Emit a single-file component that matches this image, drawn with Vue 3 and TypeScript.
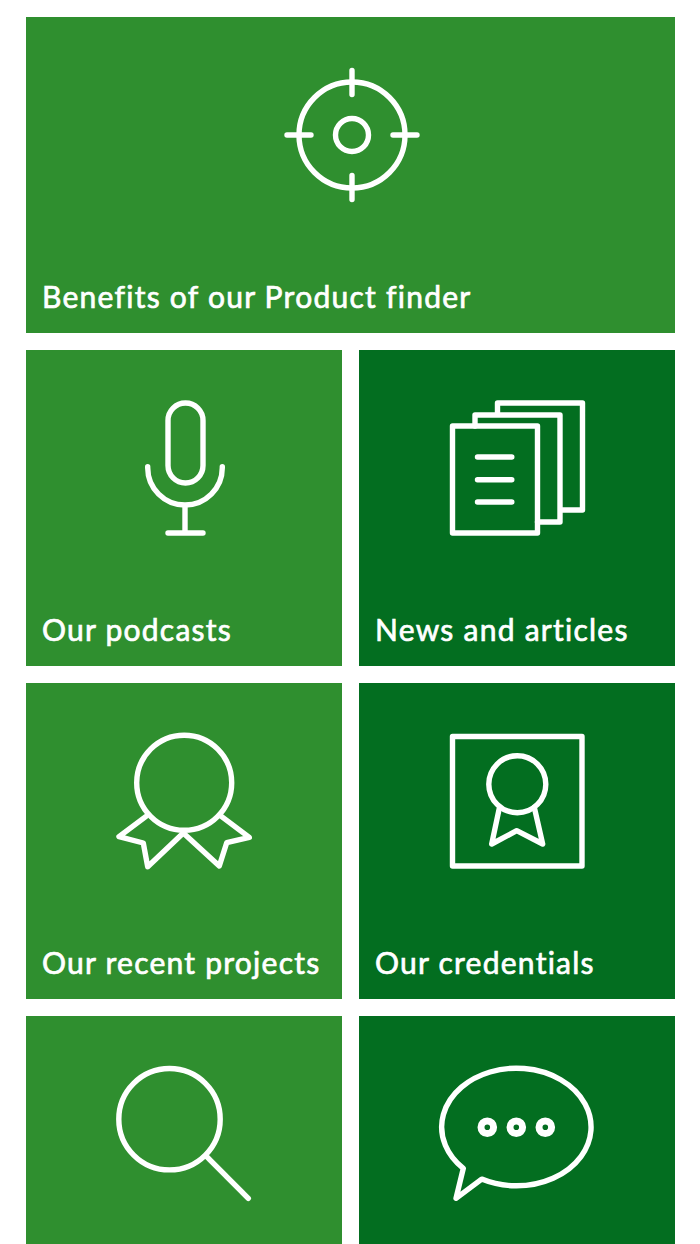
<script setup lang="ts">
type Tile = {
  icon: string;
  label: string;
  dark?: boolean;
  wide?: boolean;
};

const tiles: Tile[] = [
  { icon: "target", label: "Benefits of our Product finder", wide: true },
  { icon: "mic", label: "Our podcasts" },
  { icon: "pages", label: "News and articles", dark: true },
  { icon: "award", label: "Our recent projects" },
  { icon: "certificate", label: "Our credentials", dark: true },
  // the last row runs off the bottom of the page, labels are not visible
  { icon: "search", label: "" },
  { icon: "chat", label: "", dark: true },
];

const dots = [50.3, 79.3, 108.3];
</script>

<template>
  <div class="tiles">
    <a
      v-for="tile in tiles"
      :key="tile.icon"
      class="tile"
      :class="{ 'tile-dark': tile.dark, 'tile-wide': tile.wide }"
    >
      <svg class="tile-icon" viewBox="0 0 160 160" width="160" height="160">
        <g v-if="tile.icon === 'target'">
          <circle cx="81" cy="78" r="53" />
          <circle cx="81" cy="78" r="16.5" />
          <path d="M81 13.5v24M81 118.5v24M16 78h24M122 78h24" />
        </g>
        <g v-else-if="tile.icon === 'mic'">
          <rect x="64" y="13" width="35" height="80" rx="17.5" />
          <path d="M43.7 76.7v1a37.3 37.3 0 0 0 74.6 0v-1M81 115v28M64 143h35" />
        </g>
        <g v-else-if="tile.icon === 'pages'">
          <rect x="15.5" y="36" width="85" height="107" />
          <path d="M38 36V25h85v107h-22.5M60.5 25V13h85v107H123" />
          <path d="M40.5 67h34.3M40.5 89.7h34.3M40.5 112h34.3" />
        </g>
        <g v-else-if="tile.icon === 'award'">
          <circle cx="80.2" cy="59.8" r="47.5" />
          <path d="M41.7 93.7 15 113.7l24.3 6.3 4.4 23.7L79.3 110l36 33 7.4-23.3 22.6-5.4-27.6-20.6" />
        </g>
        <g v-else-if="tile.icon === 'certificate'">
          <rect x="15.5" y="13.5" width="129.5" height="129.5" />
          <circle cx="80.3" cy="61.2" r="28.5" />
          <path d="M62.3 85.3 54.7 121l25-13.3 26 13.3-8.4-36.7" />
        </g>
        <g v-else-if="tile.icon === 'search'">
          <circle cx="65.5" cy="63.2" r="50.7" />
          <path d="M102.7 100.7 144.3 142.3" />
        </g>
        <g v-else-if="tile.icon === 'chat'">
          <path d="M26.3 112.4 19 142.3l25.7-19.2A74.7 58.8 0 1 0 26.3 112.4Z" />
          <circle v-for="x in dots" :key="x" class="dot" :cx="x" cy="71.3" r="6.3" />
        </g>
      </svg>
      <span v-if="tile.label" class="tile-label">{{ tile.label }}</span>
    </a>
  </div>
</template>

<style>
html,
body {
  height: 1244px;
  overflow: hidden;
  background: #fff;
}
</style>

<style scoped>
.tiles {
  display: grid;
  grid-template-columns: 316px 316px;
  gap: 17px;
  padding: 17px 0 0 26px;
}

.tile {
  display: flex;
  flex-direction: column;
  height: 316px;
  background-color: #2f8f2f;
  color: #fff;
}

.tile-dark {
  background-color: #036e20;
}

.tile-wide {
  grid-column: 1 / 3;
}

.tile-icon {
  display: block;
  margin: 40px auto 0;
  fill: none;
  stroke: #fff;
  stroke-width: 5.4;
  stroke-linecap: round;
  stroke-linejoin: round;
}

.dot {
  stroke-width: 7;
}

.tile-label {
  margin-top: auto;
  padding: 0 16px 19px;
  font-family: Lato, "Open Sans", sans-serif;
  font-size: 30px;
  font-weight: 400;
  letter-spacing: 1.25px;
  -webkit-text-stroke: 0.7px #fff;
  line-height: 36px;
  white-space: nowrap;
}
</style>
